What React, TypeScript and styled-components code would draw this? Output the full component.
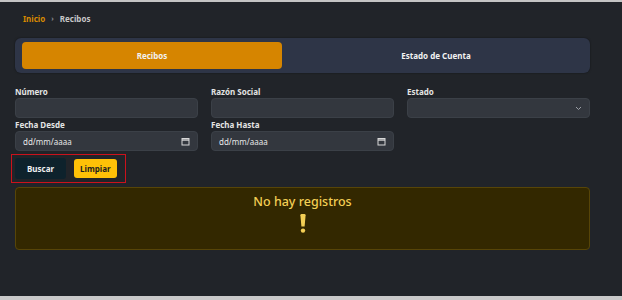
import React from "react";
import styled, { createGlobalStyle } from "styled-components";

const Global = createGlobalStyle`
  html, body { margin: 0; padding: 0; background: #c9c9c9; }
  body { font-family: "Noto Sans", "DejaVu Sans", sans-serif; }
  * { box-sizing: border-box; }
`;

const Page = styled.div`
  height: 296px;
  border-top: 2px solid #c4c4c4;
  background: #212429;
  padding: 0 32px 0 15px;
  display: flex;
  flex-direction: column;
`;

const Crumbs = styled.nav`
  display: flex;
  align-items: center;
  gap: 6px;
  height: 32px;
  padding-left: 8px;
  padding-top: 1px;
  font-size: 8px;
  font-weight: 700;
`;

const Crumb = styled.span<{ $active?: boolean }>`
  color: ${(p) => (p.$active ? "#c8c8c8" : "#d98a00")};
`;

const Sep = styled.span`
  color: #8a8d93;
  font-size: 7px;
`;

const Tabs = styled.div`
  margin-top: 4px;
  height: 35px;
  background: #2e3547;
  border-radius: 6px;
  padding: 4px 7px;
  display: grid;
  grid-template-columns: 260px 1fr;
  gap: 7px;
  box-shadow: 0 0 2px rgba(0, 0, 0, 0.5);
`;

const Tab = styled.div<{ $active?: boolean }>`
  display: flex;
  align-items: center;
  justify-content: center;
  border-radius: 4px;
  background: ${(p) => (p.$active ? "#d68500" : "transparent")};
  color: #f2f2f2;
  font-size: 8px;
  font-weight: 700;
`;

const Grid = styled.div`
  margin-top: 13px;
  display: grid;
  grid-template-columns: repeat(3, 1fr);
  column-gap: 13px;
  row-gap: 1px;
`;

const Field = styled.div`
  display: flex;
  flex-direction: column;
  gap: 1px;
`;

const Label = styled.label`
  font-size: 8px;
  font-weight: 700;
  color: #e4e4e4;
  line-height: 11px;
  height: 11px;
`;

const Control = styled.div`
  height: 20px;
  background: #33373e;
  border: 1px solid #3b4047;
  border-radius: 4px;
  display: flex;
  align-items: center;
  justify-content: space-between;
  padding: 0 7px;
  color: #e8e8e8;
  font-size: 8px;
`;

const Actions = styled.div`
  margin-top: 3px;
  margin-left: -4px;
  width: 115px;
  height: 29px;
  border: 1px solid rgb(204, 18, 28);
  display: flex;
  align-items: center;
  gap: 8px;
  padding: 0 3px;
`;

const Button = styled.button<{ $variant: "dark" | "warn" }>`
  border: none;
  font-family: inherit;
  font-size: 8px;
  font-weight: 700;
  height: ${(p) => (p.$variant === "dark" ? "21px" : "19px")};
  padding: 0 ${(p) => (p.$variant === "dark" ? "12px" : "6px")};
  border-radius: 3px;
  background: ${(p) => (p.$variant === "dark" ? "#0e222c" : "#ffc107")};
  color: ${(p) => (p.$variant === "dark" ? "#f0f0f0" : "#1e1e1e")};
`;

const Alert = styled.div`
  margin-top: 4px;
  height: 63px;
  background: #332800;
  border: 1px solid #574508;
  border-radius: 4px;
  display: flex;
  flex-direction: column;
  align-items: center;
  padding-top: 7px;
  color: #f3cf55;
`;

const AlertTitle = styled.div`
  font-size: 12.5px;
  line-height: 14px;
  font-weight: 500;
`;

const BangIcon = styled.svg`
  margin-top: 5px;
  display: block;
`;

const Exclamation = () => (
  <BangIcon width="6" height="19" viewBox="0 0 6 19" fill="#f3cf55">
    <path d="M0.4 1.2 Q0.4 0 1.6 0 H4.4 Q5.6 0 5.6 1.2 L4.6 12.5 H1.4 Z" />
    <circle cx="3" cy="16.6" r="2.2" />
  </BangIcon>
);

const CalendarIcon = () => (
  <svg width="9" height="9" viewBox="0 0 9 9" fill="none" stroke="#d8d8d8" strokeWidth="1">
    <rect x="1" y="1.5" width="7" height="6.5" />
    <line x1="1" y1="3" x2="8" y2="3" strokeWidth="1.4" />
  </svg>
);

const Chevron = () => (
  <svg width="7" height="5" viewBox="0 0 7 5" fill="none" stroke="#9a9ea5" strokeWidth="1">
    <path d="M1 1 L3.5 3.5 L6 1" />
  </svg>
);

export default function App() {
  return (
    <>
      <Global />
      <Page>
        <Crumbs>
          <Crumb>Inicio</Crumb>
          <Sep>›</Sep>
          <Crumb $active>Recibos</Crumb>
        </Crumbs>
        <Tabs>
          <Tab $active>Recibos</Tab>
          <Tab>Estado de Cuenta</Tab>
        </Tabs>
        <Grid>
          <Field>
            <Label>Número</Label>
            <Control />
          </Field>
          <Field>
            <Label>Razón Social</Label>
            <Control />
          </Field>
          <Field>
            <Label>Estado</Label>
            <Control>
              <span />
              <Chevron />
            </Control>
          </Field>
          <Field>
            <Label>Fecha Desde</Label>
            <Control>
              <span>dd/mm/aaaa</span>
              <CalendarIcon />
            </Control>
          </Field>
          <Field>
            <Label>Fecha Hasta</Label>
            <Control>
              <span>dd/mm/aaaa</span>
              <CalendarIcon />
            </Control>
          </Field>
        </Grid>
        <Actions>
          <Button $variant="dark">Buscar</Button>
          <Button $variant="warn">Limpiar</Button>
        </Actions>
        <Alert>
          <AlertTitle>No hay registros</AlertTitle>
          <Exclamation />
        </Alert>
      </Page>
    </>
  );
}
